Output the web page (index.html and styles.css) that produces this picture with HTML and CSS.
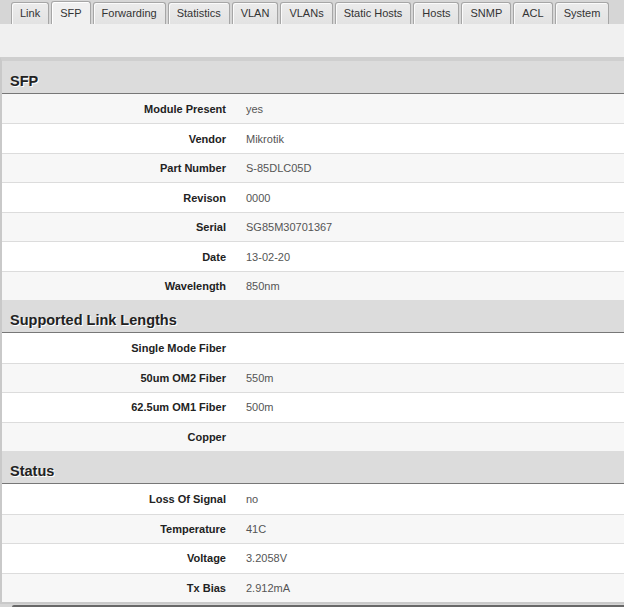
FILE: index.html
```html
<!DOCTYPE html>
<html lang="en">
<head>
    <meta charset="UTF-8">
    <meta name="viewport" content="width=device-width, initial-scale=1.0">
    <title>SFP</title>
    <link rel="stylesheet" href="styles.css">
</head>
<body>
    <div class="tabs">
        <div class="tab">Link</div>
        <div class="tab active">SFP</div>
        <div class="tab">Forwarding</div>
        <div class="tab">Statistics</div>
        <div class="tab">VLAN</div>
        <div class="tab">VLANs</div>
        <div class="tab">Static Hosts</div>
        <div class="tab">Hosts</div>
        <div class="tab">SNMP</div>
        <div class="tab">ACL</div>
        <div class="tab">System</div>
    </div>

    <div class="toolbar"></div>

    <div class="panel">
        <div class="section">SFP</div>
        <div class="row alt"><div class="label">Module Present</div><div class="value">yes</div></div>
        <div class="row"><div class="label">Vendor</div><div class="value">Mikrotik</div></div>
        <div class="row alt"><div class="label">Part Number</div><div class="value">S-85DLC05D</div></div>
        <div class="row"><div class="label">Revison</div><div class="value">0000</div></div>
        <div class="row alt"><div class="label">Serial</div><div class="value">SG85M30701367</div></div>
        <div class="row"><div class="label">Date</div><div class="value">13-02-20</div></div>
        <div class="row alt"><div class="label">Wavelength</div><div class="value">850nm</div></div>

        <div class="section">Supported Link Lengths</div>
        <div class="row"><div class="label">Single Mode Fiber</div><div class="value"></div></div>
        <div class="row alt"><div class="label">50um OM2 Fiber</div><div class="value">550m</div></div>
        <div class="row"><div class="label">62.5um OM1 Fiber</div><div class="value">500m</div></div>
        <div class="row alt"><div class="label">Copper</div><div class="value"></div></div>

        <div class="section">Status</div>
        <div class="row"><div class="label">Loss Of Signal</div><div class="value">no</div></div>
        <div class="row alt"><div class="label">Temperature</div><div class="value">41C</div></div>
        <div class="row"><div class="label">Voltage</div><div class="value">3.2058V</div></div>
        <div class="row alt"><div class="label">Tx Bias</div><div class="value">2.912mA</div></div>
    </div>

    <div class="footer-bar"></div>
</body>
</html>
```

FILE: styles.css
```css
html, body {
    margin: 0;
    padding: 0;
    overflow: hidden;
}

body {
    font-family: "Liberation Sans", Arial, sans-serif;
    font-size: 11px;
    background-color: #d6d6d6;
    color: #222;
}

/* tab strip */
.tabs {
    display: flex;
    align-items: flex-end;
    gap: 2px;
    height: 24px;
    padding-left: 11px;
    background-color: #d6d6d6;
}

.tab {
    box-sizing: border-box;
    height: 22px;
    padding: 0 8px;
    line-height: 21px;
    color: #333;
    border: 1px solid #a6a6a6;
    border-bottom: none;
    border-radius: 3px 3px 0 0;
    background: linear-gradient(#ececec, #e2e2e2);
    box-shadow: inset 1px 1px 0 #fbfbfb;
}

.tab.active {
    height: 23px;
    padding-top: 1px;
    background: #f0f0f0;
    box-shadow: inset 1px 1px 0 #ffffff;
}

.toolbar {
    height: 33px;
    background-color: #f0f0f0;
}

/* info panel */
.panel {
    border-top: 4px solid #cfcfcf;
    border-left: 2px solid #c9c9c9;
    border-bottom: 2px solid #c9c9c9;
    background-color: #fff;
}

.section {
    box-sizing: border-box;
    height: 33px;
    padding: 12px 8px 0;
    line-height: 17px;
    font-size: 14.5px;
    font-weight: bold;
    color: #222;
    text-shadow: 1px 1px 0 #fff;
    background-color: #dcdcdc;
    border-bottom: 1px solid #777;
}

.row {
    box-sizing: border-box;
    display: flex;
    align-items: center;
    height: 29.47px;
    background-color: #fff;
    border-top: 1px solid #dcdcdc;
}

.section + .row {
    border-top: none;
}

.row.alt {
    background-color: #f7f7f7;
}

.label {
    box-sizing: border-box;
    width: 234px;
    padding-right: 10px;
    text-align: right;
    font-weight: bold;
    color: #222;
}

.value {
    padding-left: 10px;
    color: #555;
}

.footer-bar {
    height: 10px;
    margin: 1px 0 0 12px;
    background-color: #686868;
    border-radius: 2px 0 0 0;
}
```
